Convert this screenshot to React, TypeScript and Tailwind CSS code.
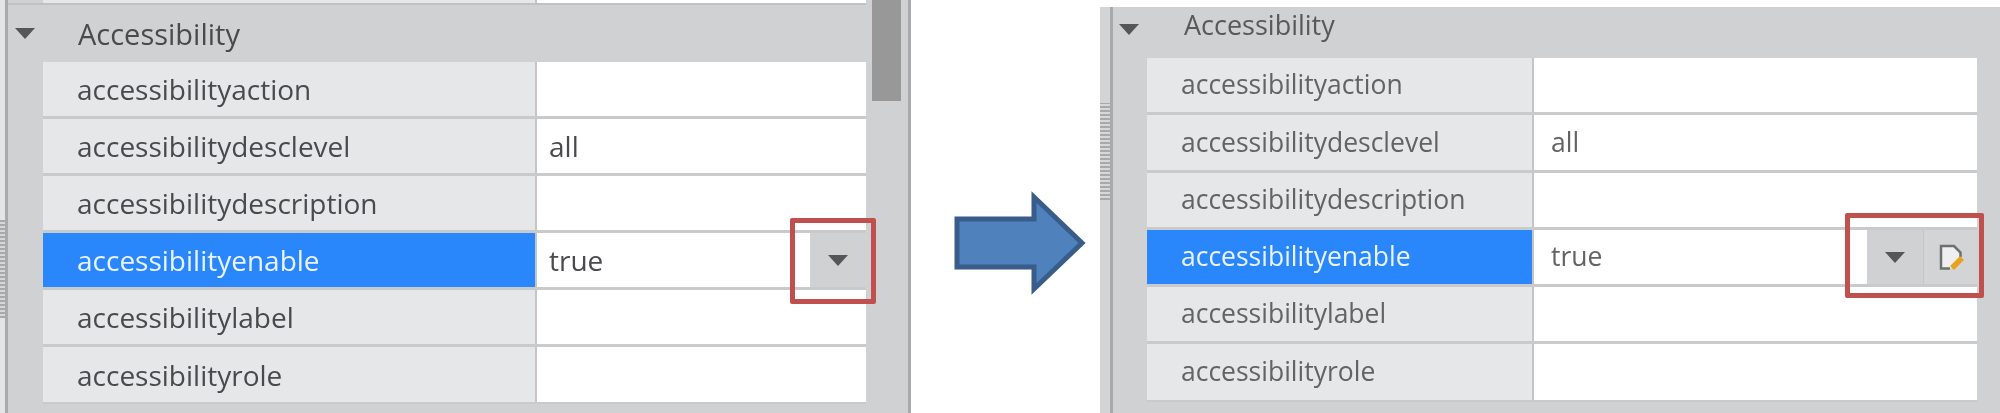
const rows = [
  { name: "accessibilityaction", value: "" },
  { name: "accessibilitydesclevel", value: "all" },
  { name: "accessibilitydescription", value: "" },
  { name: "accessibilityenable", value: "true", selected: true },
  { name: "accessibilitylabel", value: "" },
  { name: "accessibilityrole", value: "" },
];

const Caret = () => (
  <svg width="20" height="11" viewBox="0 0 20 11" className="blur-[0.5px]">
    <path d="M0 0H20L10 11Z" fill="#555658" />
  </svg>
);

const EditIcon = () => (
  <svg width="28" height="28" viewBox="0 0 28 28" className="blur-[0.6px]">
    <path d="M3 2H17L24 9V15L13 26H3Z" fill="#efefef" />
    <path d="M13 25.5H4V3H17L23.5 9.5V14" fill="none" stroke="#6e6f71" strokeWidth="2.5" />
    <path d="M25 15L15 25" stroke="#e8a21d" strokeWidth="5.5" />
  </svg>
);

const PropertyRow = ({ row, edit, rowClass, textClass, nameWidth, valuePad }: { row: (typeof rows)[number]; edit?: boolean; rowClass: string; textClass: string; nameWidth: string; valuePad: string }) => (
  <div className={`flex ${rowClass} border-b-[3px] border-[#c9cacb] last:border-b-[2px]`}>
    <div className={`${nameWidth} flex items-center pl-[34px] ${row.selected ? "bg-[#2a87fb] text-[#eaf3ff]" : `bg-[#e6e7e8] ${textClass}`}`}>
      <span className="blur-[0.5px]">{row.name}</span>
    </div>
    <div className="w-[2px] bg-[#c4c5c6]" />
    <div className={`flex-1 flex items-center bg-white ${valuePad} ${textClass}`}>
      <span className="blur-[0.5px] flex-1">{row.value}</span>
      {row.selected && (
        <div className="flex self-stretch">
          <div className="w-[56px] flex items-center justify-center bg-[#d0d1d3]">
            <Caret />
          </div>
          {edit && (
            <div className="w-[54px] flex items-center justify-center bg-[#d3d4d6] border-l border-[#c4c5c7]">
              <EditIcon />
            </div>
          )}
        </div>
      )}
    </div>
  </div>
);

const App = () => (
  <div className="flex w-[2000px] h-[413px] bg-white overflow-hidden font-['Open_Sans',sans-serif]">
    {/* before */}
    <div className="relative w-[911px] shrink-0 flex bg-[#d0d1d3]">
      <div className="w-[5px] bg-[#e4e5e6]">
        <div className="w-full h-[98px] mt-[220px] bg-[repeating-linear-gradient(0deg,#a8a9aa_0,#a8a9aa_2px,#d6d7d8_2px,#d6d7d8_4px)]" />
      </div>
      <div className="w-[3px] bg-[#a9aaab]" />
      <div className="flex-1 flex flex-col">
        <div className="flex h-[3px]">
          <div className="w-[35px]" />
          <div className="w-[492px] bg-[#e6e7e8]" />
          <div className="w-[2px] bg-[#c4c5c6]" />
          <div className="w-[329px] bg-white" />
        </div>
        <div className="h-[2px] w-[858px] bg-[#c0c1c2]" />
        <div className="h-[57px] flex items-center text-[29px] text-[#4a4a4c]">
          <span className="w-[70px] flex pl-[7px]">
            <Caret />
          </span>
          <span className="blur-[0.5px]">Accessibility</span>
        </div>
        <div className="flex flex-1 text-[28px]">
          <div className="w-[35px]" />
          <div className="w-[823px]">
            {rows.map((row) => (
              <PropertyRow key={row.name} row={row} rowClass="h-[57px]" textClass="text-[#4a4a4e]" nameWidth="w-[492px]" valuePad="pl-3" />
            ))}
          </div>
          <div className="w-[6px]" />
          <div className="w-[29px] h-[101px] -mt-[62px] bg-[#989898]" />
          <div className="flex-1" />
        </div>
      </div>
      <div className="w-[3px] bg-[#a9aaab]" />
      <div className="absolute left-[790px] top-[218px] w-[86px] h-[86px] border-[5px] border-[#c0504d] rounded-[2px]" />
    </div>

    {/* arrow */}
    <div className="w-[189px] shrink-0 flex items-center justify-center">
      <svg width="132" height="104" viewBox="0 0 132 104" className="ml-[28px] mt-[72px]">
        <path d="M3 28H80V6L128 52L80 98V76H3Z" fill="#4f81bd" stroke="#385d8a" strokeWidth="5" />
      </svg>
    </div>

    {/* after */}
    <div className="relative w-[900px] shrink-0 mt-[7px] flex bg-[#d0d1d3]">
      <div className="w-[10px] bg-[#d3d4d5]">
        <div className="w-full h-[97px] mt-[96px] bg-[repeating-linear-gradient(0deg,#a8a9aa_0,#a8a9aa_2px,#d6d7d8_2px,#d6d7d8_4px)]" />
      </div>
      <div className="w-[3px] bg-[#a9aaab]" />
      <div className="flex-1 flex flex-col">
        <div className="h-[51px] flex items-center pb-[14px] text-[27px] text-[#59595b]">
          <span className="w-[71px] flex pl-[6px] pt-[8px]">
            <Caret />
          </span>
          <span className="blur-[0.5px]">Accessibility</span>
        </div>
        <div className="flex text-[26.5px]">
          <div className="w-[34px]" />
          <div className="w-[830px]">
            {rows.map((row) => (
              <PropertyRow key={row.name} row={row} edit rowClass="h-[57.3px]" textClass="text-[#636365]" nameWidth="w-[385px]" valuePad="pl-[17px]" />
            ))}
          </div>
        </div>
      </div>
      <div className="absolute left-[745px] top-[206px] w-[139px] h-[85px] border-[5px] border-[#c0504d] rounded-[2px]" />
    </div>
  </div>
);

export default App;
